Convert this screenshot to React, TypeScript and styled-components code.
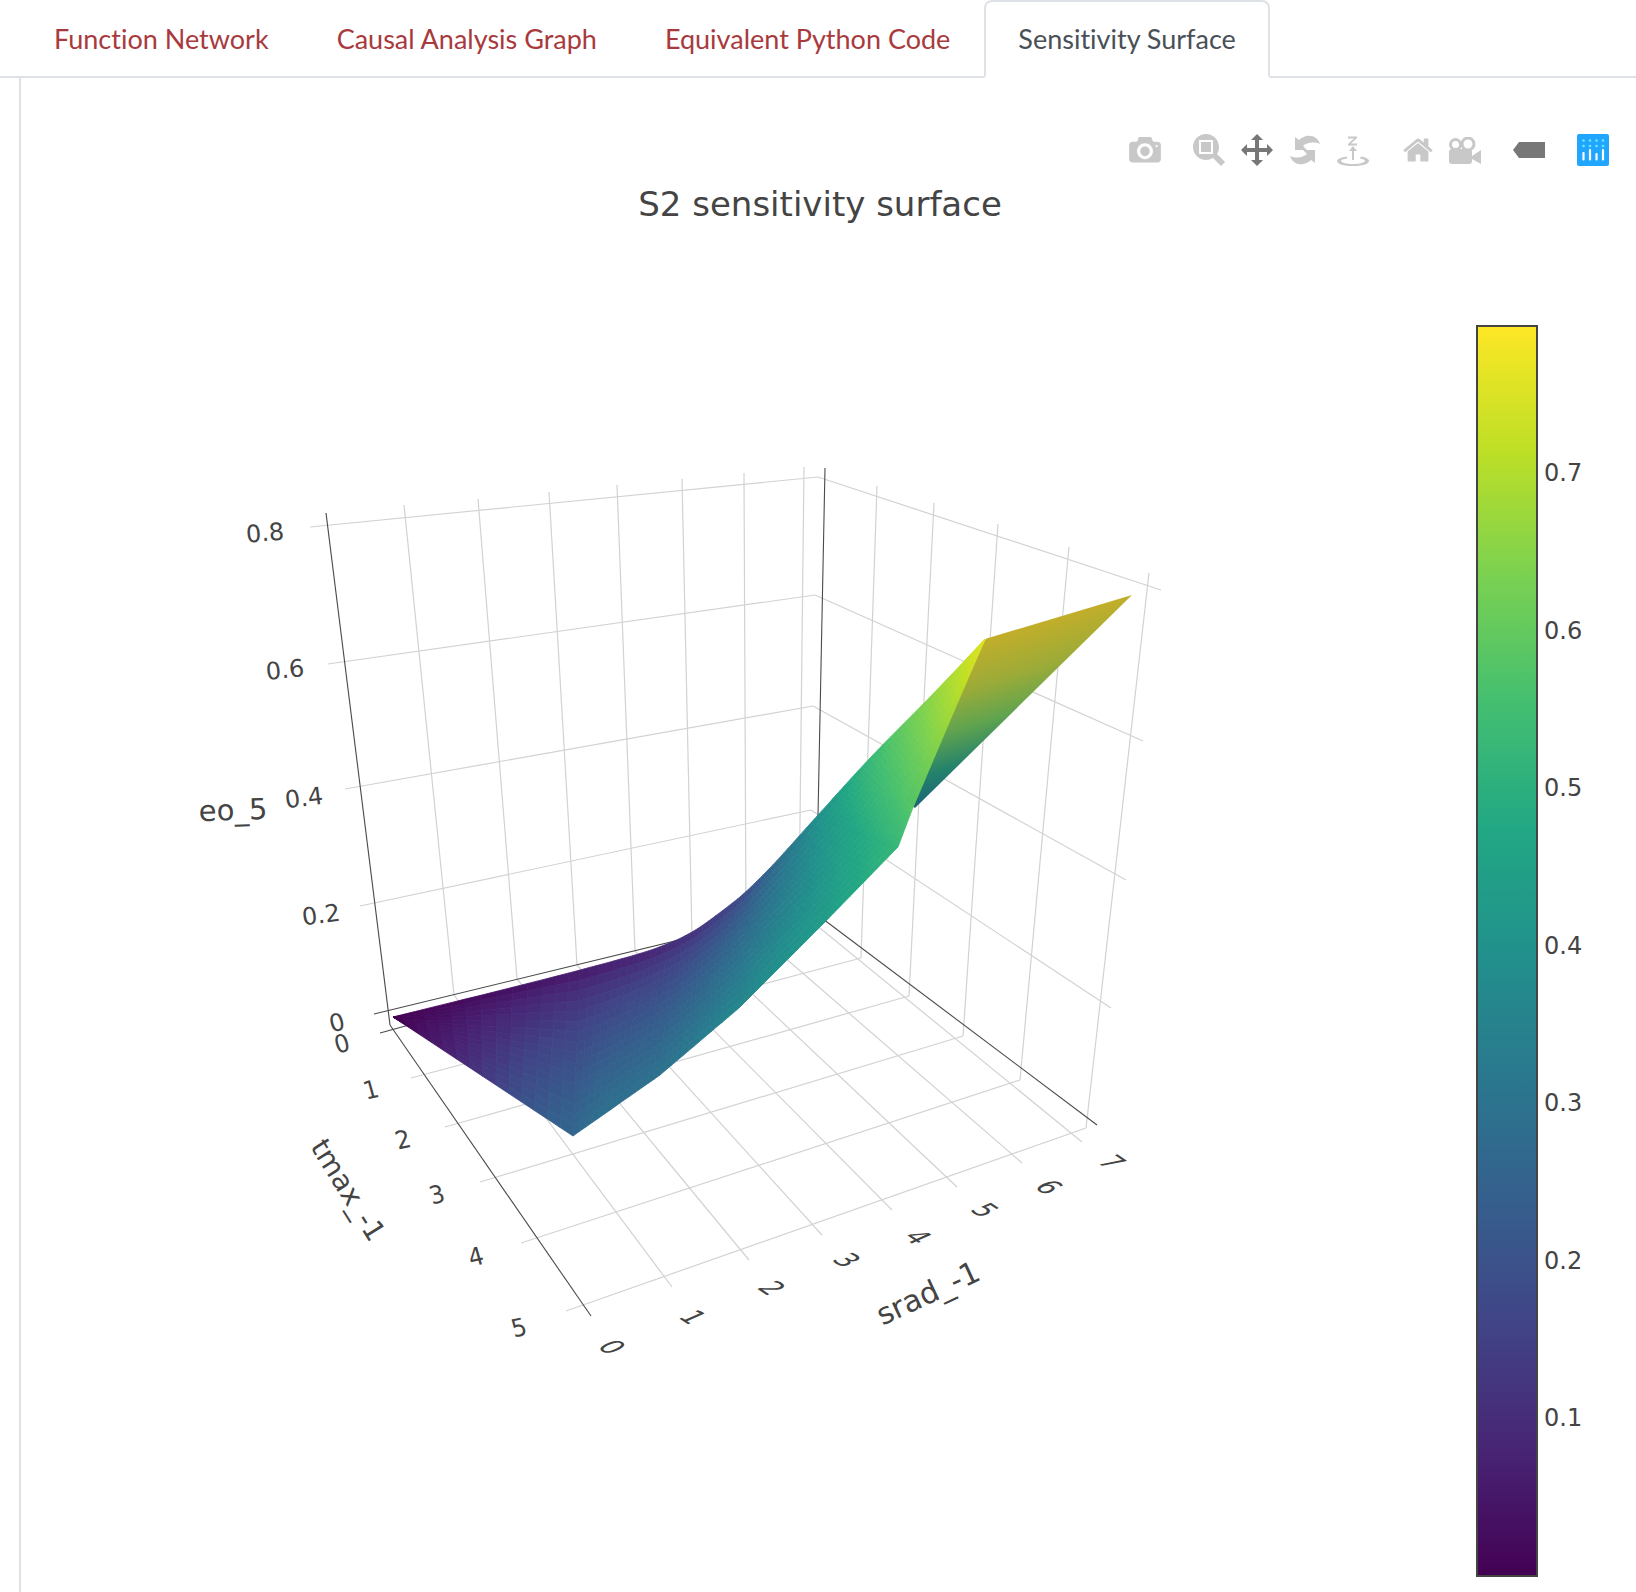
import React from "react";
import styled, { createGlobalStyle } from "styled-components";

type Pt = [number, number];

const VIRIDIS = ["#440154", "#482475", "#414487", "#355f8d", "#2a788e", "#21918c", "#22a884", "#44bf70", "#7ad151", "#bddf26", "#fde725"];

const toRgb = (hex: string) => [1, 3, 5].map((i) => parseInt(hex.slice(i, i + 2), 16));

const viridis = (n: number) => {
  const p = Math.min(Math.max(n, 0), 1) * 10;
  const i = Math.min(Math.floor(p), 9);
  const a = toRgb(VIRIDIS[i]);
  const b = toRgb(VIRIDIS[i + 1]);
  const c = a.map((v, k) => Math.round(v + (b[k] - v) * (p - i)));
  return `rgb(${c[0]},${c[1]},${c[2]})`;
};

// ribbon of the surface: upper edge, lower edge and colour value on each
const RIBBON: { t: Pt; b: Pt; ct: number; cb: number }[] = [
  { t: [393, 1017], b: [393, 1017], ct: 0, cb: 0 },
  { t: [580, 970], b: [573, 1136], ct: 0.05, cb: 0.33 },
  { t: [672, 942], b: [660, 1075], ct: 0.1, cb: 0.38 },
  { t: [726, 908], b: [739, 1008], ct: 0.17, cb: 0.46 },
  { t: [766, 872], b: [824, 923], ct: 0.29, cb: 0.55 },
  { t: [818, 815], b: [898, 847], ct: 0.48, cb: 0.66 },
  { t: [870, 758], b: [912, 810], ct: 0.66, cb: 0.73 },
  { t: [930, 697], b: [948, 725], ct: 0.82, cb: 0.85 },
  { t: [985, 639], b: [985, 639], ct: 0.95, cb: 0.95 },
];

const lerp = (a: number, b: number, k: number) => a + (b - a) * k;

// catmull-rom, so the colours and the upper edge have no visible kinks
const spline = (p0: number, p1: number, p2: number, p3: number, u: number) =>
  0.5 * (2 * p1 + (p2 - p0) * u + (2 * p0 - 5 * p1 + 4 * p2 - p3) * u * u + (3 * p1 - p0 - 3 * p2 + p3) * u * u * u);

const buildRibbon = () => {
  const cells: { points: string; fill: string }[] = [];
  const nu = 14;
  const nv = 16;
  const last = RIBBON.length - 1;
  for (let s = 0; s < last; s++) {
    const P = RIBBON[Math.max(s - 1, 0)];
    const A = RIBBON[s];
    const B = RIBBON[s + 1];
    const N = RIBBON[Math.min(s + 2, last)];
    const at = (u: number, v: number): Pt => {
      const tx = spline(P.t[0], A.t[0], B.t[0], N.t[0], u);
      const ty = spline(P.t[1], A.t[1], B.t[1], N.t[1], u);
      const bx = lerp(A.b[0], B.b[0], u);
      const by = lerp(A.b[1], B.b[1], u);
      return [lerp(tx, bx, v), lerp(ty, by, v)];
    };
    for (let i = 0; i < nu; i++) {
      for (let j = 0; j < nv; j++) {
        const u0 = i / nu;
        const u1 = (i + 1) / nu;
        const v0 = j / nv;
        const v1 = (j + 1) / nv;
        const um = (u0 + u1) / 2;
        const vm = Math.pow((v0 + v1) / 2, 0.62);
        const ct = spline(P.ct, A.ct, B.ct, N.ct, um);
        const cb = spline(P.cb, A.cb, B.cb, N.cb, um);
        const pts = [at(u0, v0), at(u1, v0), at(u1, v1), at(u0, v1)];
        cells.push({
          points: pts.map((p) => `${p[0].toFixed(1)},${p[1].toFixed(1)}`).join(" "),
          fill: viridis(lerp(ct, cb, vm)),
        });
      }
    }
  }
  return cells;
};

const RIBBON_CELLS = buildRibbon();

const LINES: { a: Pt; b: Pt; dark?: boolean }[] = [
  // left wall, verticals
  { a: [404, 505], b: [454, 995] },
  { a: [478, 499], b: [517, 979] },
  { a: [549, 492], b: [577, 965] },
  { a: [617, 485], b: [635, 951] },
  { a: [682, 479], b: [692, 937] },
  { a: [744, 473], b: [746, 924] },
  { a: [804, 467], b: [799, 911] },
  // left wall, z levels
  { a: [310, 527], b: [818, 477] },
  { a: [328, 664], b: [815, 595] },
  { a: [345, 789], b: [813, 706] },
  { a: [360, 906], b: [811, 810] },
  // right wall, z levels
  { a: [818, 477], b: [1161, 590] },
  { a: [815, 595], b: [1143, 741] },
  { a: [813, 706], b: [1126, 880] },
  { a: [811, 810], b: [1111, 1008] },
  // right wall, verticals
  { a: [877, 486], b: [861, 958] },
  { a: [934, 503], b: [909, 996] },
  { a: [998, 524], b: [963, 1036] },
  { a: [1069, 547], b: [1020, 1080] },
  { a: [1149, 573], b: [1086, 1128] },
  // floor, tmax levels
  { a: [411, 1078], b: [861, 958] },
  { a: [445, 1127], b: [909, 996] },
  { a: [480, 1182], b: [963, 1036] },
  { a: [521, 1243], b: [1020, 1080] },
  { a: [566, 1311], b: [1086, 1128] },
  // floor, srad levels
  { a: [454, 995], b: [672, 1287] },
  { a: [517, 979], b: [749, 1260] },
  { a: [577, 965], b: [822, 1235] },
  { a: [635, 951], b: [892, 1210] },
  { a: [692, 937], b: [957, 1187] },
  { a: [746, 924], b: [1022, 1163] },
  { a: [799, 911], b: [1082, 1142] },
  // axes
  { a: [326, 513], b: [390, 1025], dark: true },
  { a: [390, 1025], b: [591, 1316], dark: true },
  { a: [374, 1014], b: [811, 908], dark: true },
  { a: [380, 1033], b: [420, 1022], dark: true },
  { a: [825, 468], b: [818, 816], dark: true },
  { a: [811, 910], b: [1097, 1125], dark: true },
];

const Z_TICKS: { label: string; x: number; y: number }[] = [
  { label: "0.8", x: 265, y: 533 },
  { label: "0.6", x: 285, y: 670 },
  { label: "0.4", x: 304, y: 798 },
  { label: "0.2", x: 321, y: 915 },
];

const TMAX_TICKS: { label: string; x: number; y: number }[] = [
  { label: "0", x: 342, y: 1044 },
  { label: "1", x: 371, y: 1090 },
  { label: "2", x: 403, y: 1140 },
  { label: "3", x: 437, y: 1195 },
  { label: "4", x: 476, y: 1257 },
  { label: "5", x: 519, y: 1328 },
];

const SRAD_TICKS: { label: string; x: number; y: number }[] = [
  { label: "0", x: 612, y: 1347 },
  { label: "1", x: 693, y: 1317 },
  { label: "2", x: 772, y: 1288 },
  { label: "3", x: 847, y: 1260 },
  { label: "4", x: 918, y: 1237 },
  { label: "5", x: 985, y: 1210 },
  { label: "6", x: 1049, y: 1187 },
  { label: "7", x: 1112, y: 1162 },
];

const BAR_TICKS = ["0.7", "0.6", "0.5", "0.4", "0.3", "0.2", "0.1"];

const TABS = ["Function Network", "Causal Analysis Graph", "Equivalent Python Code", "Sensitivity Surface"];

const GlobalStyle = createGlobalStyle`
  html, body {
    margin: 0;
    padding: 0;
    background: #fff;
    overflow: hidden;
  }
`;

const Page = styled.div`
  width: 1636px;
  height: 1592px;
  overflow: hidden;
`;

const TabBar = styled.nav`
  display: flex;
  height: 78px;
  box-sizing: border-box;
  padding-left: 20px;
  border-bottom: 2px solid #dee2e6;
`;

const Tab = styled.a<{ $active?: boolean }>`
  display: flex;
  align-items: center;
  box-sizing: border-box;
  height: 78px;
  padding: 0 32px 2px;
  border: 2px solid ${(p) => (p.$active ? "#dee2e6" : "transparent")};
  border-bottom-color: ${(p) => (p.$active ? "#fff" : "transparent")};
  border-radius: 8px 8px 0 0;
  background: ${(p) => (p.$active ? "#fff" : "transparent")};
  color: ${(p) => (p.$active ? "#495057" : "#a83a3e")};
  font-family: "Lato", "Liberation Sans", sans-serif;
  font-size: 27px;
  font-variant-ligatures: none;
`;

const Panel = styled.section`
  margin-left: 19px;
  height: 1514px;
  border-left: 2px solid #dee2e6;
`;

const Modebar = styled.div`
  display: flex;
  justify-content: flex-end;
  align-items: center;
  gap: 32px;
  height: 32px;
  padding: 56px 27px 0 0;
`;

const ModeGroup = styled.div<{ $after?: number }>`
  display: flex;
  align-items: center;
  gap: 16px;
  margin-right: ${(p) => p.$after ?? 0}px;
`;

const Icon = styled.svg<{ $active?: boolean }>`
  display: block;
  flex: none;
  fill: ${(p) => (p.$active ? "#777" : "#c8c8c8")};
  color: ${(p) => (p.$active ? "#777" : "#c8c8c8")};
`;

const Title = styled.h2`
  margin: 18px 0 0;
  width: 1598px;
  text-align: center;
  font-family: "DejaVu Sans", Verdana, sans-serif;
  font-size: 34px;
  font-weight: 400;
  line-height: 40px;
  color: #444;
`;

const PlotRow = styled.div`
  display: flex;
  align-items: flex-start;
`;

const Scene = styled.svg`
  display: block;
  flex: none;
  margin: 236px 0 0 159px;
`;

const SceneLine = styled.line<{ $dark?: boolean }>`
  stroke: ${(p) => (p.$dark ? "#4a4a4a" : "#d2d2d2")};
  stroke-width: ${(p) => (p.$dark ? 1.1 : 1.2)};
`;

const Cell = styled.polygon`
  stroke-width: 0.8;
`;

const SceneText = styled.text<{ $size?: number }>`
  font-family: "DejaVu Sans", Verdana, sans-serif;
  font-size: ${(p) => p.$size ?? 24}px;
  fill: #444;
  text-anchor: middle;
  dominant-baseline: central;
`;

const ColorBar = styled.div`
  display: flex;
  flex: none;
  margin: 101px 0 0 296px;
`;

const Bar = styled.div`
  width: 62px;
  height: 1252px;
  box-sizing: border-box;
  border: 2px solid #444;
  background: linear-gradient(to top, ${VIRIDIS.join(", ")});
`;

const BarTicks = styled.ul`
  list-style: none;
  margin: 0;
  padding: 70px 0 0 6px;
`;

const BarTick = styled.li`
  height: 157.5px;
  line-height: 157.5px;
  font-family: "DejaVu Sans", Verdana, sans-serif;
  font-size: 24px;
  color: #444;
`;

const CameraIcon = () => (
  <Icon width={32} height={27} viewBox="0 0 1000 850">
    <path
      transform="matrix(1 0 0 -1 0 750)"
      d="m500 450c-83 0-150-67-150-150 0-83 67-150 150-150 83 0 150 67 150 150 0 83-67 150-150 150z m400 150h-120c-16 0-34 13-39 29l-31 93c-6 15-23 28-40 28h-340c-16 0-34-13-39-28l-31-94c-6-15-23-28-40-28h-120c-55 0-100-45-100-100v-450c0-55 45-100 100-100h800c55 0 100 45 100 100v450c0 55-45 100-100 100z m-400-550c-138 0-250 112-250 250 0 138 112 250 250 250 138 0 250-112 250-250 0-138-112-250-250-250z m365 380c-19 0-35 16-35 35 0 19 16 35 35 35 19 0 35-16 35-35 0-19-16-35-35-35z"
    />
  </Icon>
);

const ZoomIcon = () => (
  <Icon width={32} height={32} viewBox="0 0 1000 1000">
    <path
      transform="matrix(1 0 0 -1 0 850)"
      d="m1000-25l-250 251c40 63 63 138 63 218 0 224-182 406-407 406-224 0-406-182-406-406s183-406 407-406c80 0 155 22 218 62l250-250 125 125z m-812 250l0 438 437 0 0-438-437 0z m62 375l313 0 0-312-313 0 0 312z"
    />
  </Icon>
);

const PanIcon = () => (
  <Icon $active width={32} height={32} viewBox="0 0 1000 1000">
    <path
      transform="matrix(1 0 0 -1 0 850)"
      d="m1000 350l-187 188 0-125-250 0 0 250 125 0-188 187-187-187 125 0 0-250-250 0 0 125-188-188 186-187 0 125 252 0 0-250-125 0 187-188 188 188-125 0 0 250 250 0 0-126 187 188z"
    />
  </Icon>
);

const ORBIT_BLADE = "M31 9C29 3 24 0 18 1C15 1.500 12 3 10 5L6 2L6 15L18 15L14 11C17 8 24 6 31 9z";

const OrbitIcon = () => (
  <Icon width={32} height={30} viewBox="0 0 32 30">
    <path d={ORBIT_BLADE} />
    <path d={ORBIT_BLADE} transform="rotate(180 16 15)" />
  </Icon>
);

const TurntableIcon = () => (
  <Icon width={32} height={31} viewBox="0 0 32 31">
    <path d="M11 1.500h9v1.600l-6 5.400h6v2h-9V8.900l6-5.400h-6z" />
    <path d="M16 11l4 5h-3v9h-2v-9h-3z" />
    <path d="M10 21.500C4 22.500 0 24 0 26c0 3 7 5 16 5s16-2 16-5c0-2-3-3.600-8-4.500l-1 2c3 .6 5 1.500 5 2.500 0 1.500-5 3-12 3s-12-1.500-12-3c0-1 2-2 6-2.500z" />
  </Icon>
);

const HomeIcon = () => (
  <Icon width={30} height={26} viewBox="0 0 928.6 800">
    <path
      transform="matrix(1 0 0 -1 0 750)"
      d="m786 296v-267q0-15-11-26t-25-10h-214v214h-143v-214h-214q-15 0-25 10t-11 26v267q0 1 0 2t0 2l321 264 321-264q1-1 1-4z m124 39l-34-41q-5-5-12-6h-2q-7 0-12 3l-386 322-386-322q-7-4-13-4-7 2-12 7l-35 41q-4 5-3 13t6 12l401 334q18 15 42 15t43-15l136-114v109q0 8 5 13t13 5h107q8 0 13-5t5-13v-227l122-102q5-5 6-12t-4-13z"
    />
  </Icon>
);

const MovieIcon = () => (
  <Icon width={32} height={27} viewBox="0 0 32 27">
    <rect x="0" y="12" width="23" height="15" rx="3" />
    <path d="M23 19l9-6v14l-9-5z" />
    <circle cx="6.500" cy="7.500" r="5" fill="none" stroke="currentColor" strokeWidth="3" />
    <circle cx="19" cy="7" r="6" fill="none" stroke="currentColor" strokeWidth="3" />
  </Icon>
);

const TagIcon = () => (
  <Icon $active width={32} height={16} viewBox="0 0 32 16">
    <path d="M0 8L6 0h26v16H6z" />
  </Icon>
);

const LogoBg = styled.rect`
  fill: #21a6ff;
`;

const LogoDot = styled.circle`
  fill: #6be6ff;
`;

const LogoBar = styled.rect`
  fill: #fff;
`;

const LogoIcon = () => (
  <Icon width={32} height={32} viewBox="0 0 32 32">
    <LogoBg width="32" height="32" rx="2" />
    {[6.5, 13, 19.5, 26].map((x) => (
      <React.Fragment key={x}>
        <LogoDot cx={x} cy={6.5} r={1.3} />
        <LogoDot cx={x} cy={12} r={1.3} />
      </React.Fragment>
    ))}
    <LogoBar x="5.4" y="18" width="2.2" height="8.5" rx="1" />
    <LogoBar x="11.9" y="15" width="2.2" height="11.5" rx="1" />
    <LogoBar x="18.4" y="19" width="2.2" height="7.5" rx="1" />
    <LogoBar x="24.9" y="15" width="2.2" height="11.5" rx="1" />
  </Icon>
);

const SurfaceScene = () => (
  <Scene width={1000} height={920} viewBox="180 460 1000 920">
    <defs>
      <linearGradient id="backFace" gradientUnits="userSpaceOnUse" x1="985" y1="639" x2="1026" y2="775">
        <stop offset="0" stopColor="#c2ae2a" />
        <stop offset="0.3" stopColor="#9cab38" />
        <stop offset="0.55" stopColor="#62a44e" />
        <stop offset="0.8" stopColor="#24826c" />
        <stop offset="1" stopColor="#1c6476" />
      </linearGradient>
    </defs>

    {LINES.map((l, i) => (
      <SceneLine key={i} $dark={l.dark} x1={l.a[0]} y1={l.a[1]} x2={l.b[0]} y2={l.b[1]} />
    ))}

    <polygon points="985,639 1132,595 915,808 905,800" fill="url(#backFace)" />
    {RIBBON_CELLS.map((c, i) => (
      <Cell key={i} points={c.points} fill={c.fill} stroke={c.fill} />
    ))}

    {Z_TICKS.map((t, i) => (
      <SceneText key={t.label} transform={`translate(${t.x} ${t.y}) rotate(${-5 - i})`}>
        {t.label}
      </SceneText>
    ))}
    <SceneText transform="translate(337 1023) rotate(-14)">0</SceneText>
    {TMAX_TICKS.map((t) => (
      <SceneText key={t.label} transform={`translate(${t.x} ${t.y}) matrix(0.95 -0.2 0.28 1 0 0)`}>
        {t.label}
      </SceneText>
    ))}
    {SRAD_TICKS.map((t) => (
      <SceneText key={t.label} transform={`translate(${t.x} ${t.y}) matrix(0.85 0.56 -1.12 0.5 0 0)`}>
        {t.label}
      </SceneText>
    ))}

    <SceneText $size={29} transform="translate(233 810) rotate(-2)">
      eo_5
    </SceneText>
    <SceneText $size={28} transform="translate(348 1190) rotate(58)">
      tmax_-1
    </SceneText>
    <SceneText $size={30} transform="translate(928 1293) rotate(-25)">
      srad_-1
    </SceneText>
  </Scene>
);

export default function App() {
  return (
    <Page>
      <GlobalStyle />
      <TabBar>
        {TABS.map((t, i) => (
          <Tab key={t} $active={i === 3}>
            {t}
          </Tab>
        ))}
      </TabBar>
      <Panel>
        <Modebar>
          <ModeGroup>
            <CameraIcon />
          </ModeGroup>
          <ModeGroup $after={2}>
            <ZoomIcon />
            <PanIcon />
            <OrbitIcon />
            <TurntableIcon />
          </ModeGroup>
          <ModeGroup>
            <HomeIcon />
            <MovieIcon />
          </ModeGroup>
          <ModeGroup>
            <TagIcon />
          </ModeGroup>
          <ModeGroup>
            <LogoIcon />
          </ModeGroup>
        </Modebar>
        <Title>S2 sensitivity surface</Title>
        <PlotRow>
          <SurfaceScene />
          <ColorBar>
            <Bar />
            <BarTicks>
              {BAR_TICKS.map((t) => (
                <BarTick key={t}>{t}</BarTick>
              ))}
            </BarTicks>
          </ColorBar>
        </PlotRow>
      </Panel>
    </Page>
  );
}
